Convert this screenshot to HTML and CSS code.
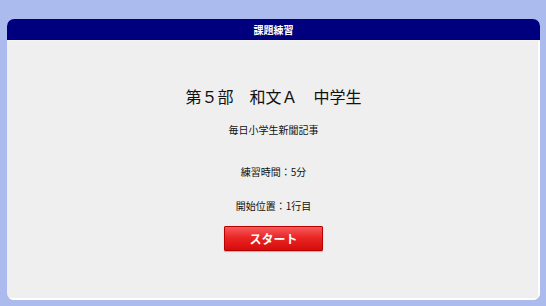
FILE: index.html
```html
<!DOCTYPE html>
<html lang="ja">
<head>
<meta charset="utf-8">
<link rel="stylesheet" href="styles.css">
</head>
<body>
<div class="panel">
  <div class="panel-head">課題練習</div>
  <div class="panel-body">
    <div class="title">第５部　和文Ａ　中学生</div>
    <div class="subtitle">毎日小学生新聞記事</div>
    <div class="info info-time">練習時間：5分</div>
    <div class="info info-pos">開始位置：1行目</div>
    <button class="start">スタート</button>
  </div>
</div>
</body>
</html>
```
FILE: styles.css
```css
html, body {
  margin: 0;
  padding: 0;
  height: 100%;
}
body {
  background: #abbbee;
  font-family: "Noto Sans CJK JP", "Noto Sans", sans-serif;
  color: #111;
  overflow: hidden;
}
.panel {
  margin: 19px 0 0 7px;
  width: 533px;
  height: 281px;
  border-radius: 7px;
  background: #efefef;
  display: flex;
  flex-direction: column;
  overflow: hidden;
}
.panel-head {
  height: 21px;
  background: #00007e;
  color: #fff;
  font-size: 10px;
  font-weight: bold;
  line-height: 21px;
  text-align: center;
  border-bottom: 1px solid #f4f4f4;
}
.panel-body {
  flex: 1;
  display: flex;
  flex-direction: column;
  align-items: center;
  padding-top: 44px;
  box-shadow: inset -2px -2px 0 #fff;
}
.title {
  font-size: 16px;
  line-height: 22px;
}
.subtitle {
  font-size: 10px;
  line-height: 14px;
  margin-top: 16px;
}
.info {
  font-size: 10px;
  line-height: 14px;
}
.info-time { margin-top: 28px; }
.info-pos { margin-top: 20px; }
.start {
  margin-top: 13px;
  width: 99px;
  height: 25px;
  border: 1px solid #b80000;
  border-radius: 1px;
  background: linear-gradient(#f65a5a 0%, #e92222 50%, #d40c0c 100%);
  color: #fff;
  font-family: "Noto Sans CJK JP", sans-serif;
  font-size: 12px;
  font-weight: bold;
  padding: 0;
  box-shadow: 0 1px 1px rgba(0,0,0,0.25);
}
```
